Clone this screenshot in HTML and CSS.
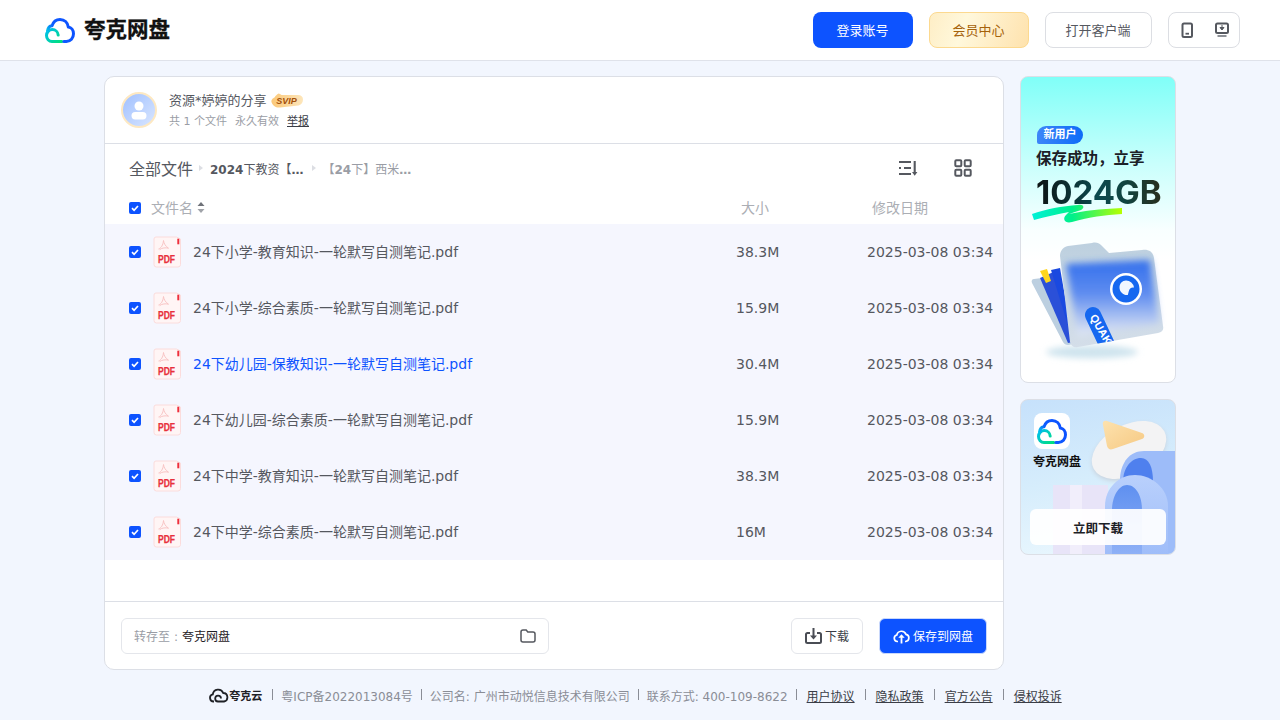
FILE: index.html
```html
<!DOCTYPE html>
<html lang="zh-CN">
<head>
<meta charset="utf-8">
<title>夸克网盘分享</title>
<link rel="stylesheet" href="styles.css">
</head>
<body>
<svg class="defs" width="0" height="0" aria-hidden="true">
  <defs>
    <linearGradient id="cloudBlue" gradientUnits="userSpaceOnUse" x1="3" y1="16" x2="22" y2="6">
      <stop offset="0" stop-color="#00c9e8"/><stop offset=".4" stop-color="#0d5cff"/><stop offset="1" stop-color="#0d53ff"/>
    </linearGradient>
    <linearGradient id="cloudGreen" gradientUnits="userSpaceOnUse" x1="2" y1="10" x2="16" y2="24">
      <stop offset="0" stop-color="#00bdf0"/><stop offset="1" stop-color="#00e07c"/>
    </linearGradient>
    <linearGradient id="svipFill" x1="0" y1="0" x2="1" y2="0">
      <stop offset="0" stop-color="#fbc878"/><stop offset="1" stop-color="#fde6bb"/>
    </linearGradient>
    <symbol id="logo" viewBox="0 0 30 25">
      <path d="M16.700 23.400H7C3.900 23.400 1.500 20.800 1.500 17.500 1.500 14.300 4 11.600 7.300 11.600c3.200 0 5.700 2.500 5.900 5.500" fill="none" stroke="url(#cloudGreen)" stroke-width="3" stroke-linecap="round"/>
      <path d="M2.500 13C3 10 4.800 8 7 7.800 8.300 3.800 11.300 1.500 15 1.500c4.500 0 7.700 3.200 8.300 7.500 3 .4 5.200 3.300 5.200 6.800 0 4.300-3 7.600-7.100 7.600h-2.600" fill="none" stroke="url(#cloudBlue)" stroke-width="3" stroke-linecap="round" stroke-linejoin="round"/>
    </symbol>
    <symbol id="paper" viewBox="0 0 28 32">
      <path d="M3 1h20.500L27.500 3v25.500A2.500 2.500 0 0 1 25 31H3.500A2.500 2.500 0 0 1 1 28.500V3A2 2 0 0 1 3 1z" fill="#fff5f5" stroke="#fbdcdc"/>
      <rect x="24.300" y="2.700" width="2" height="5.600" fill="#ee2f3c"/>
      <path d="M5.500 13c2.500-1 4.500-3.500 5-8.500.3 3 2 5.700 5 7.700-3-.7-6.500-.5-9 1.500" fill="none" stroke="#f9c4c4" stroke-width="1"/>
    </symbol>
    <symbol id="check" viewBox="0 0 12 12">
      <rect width="12" height="12" rx="2" fill="#0d53ff"/>
      <path d="M3 6.200l2.100 2.100L9 4" fill="none" stroke="#fff" stroke-width="1.700"/>
    </symbol>
  </defs>
</svg>

<header class="topbar">
  <div class="brand">
    <svg class="brand-logo"><use href="#logo"/></svg>
    <span class="brand-name">夸克网盘</span>
  </div>
  <nav class="top-actions">
    <a class="btn btn-login">登录账号</a>
    <a class="btn btn-vip">会员中心</a>
    <a class="btn btn-client">打开客户端</a>
    <div class="btn btn-icons">
      <svg width="12" height="16" viewBox="0 0 12 16"><rect x="1.500" y="1.500" width="9.500" height="13.500" rx="1.500" fill="none" stroke="#55585f" stroke-width="2"/><rect x="4.500" y="10.800" width="3.500" height="1.800" fill="#55585f"/></svg>
      <svg width="14" height="16" viewBox="0 0 14 16"><rect x="1" y="1.500" width="12" height="9.500" rx="1.500" fill="none" stroke="#55585f" stroke-width="2"/><path d="M7 3v3.500M5 5.500L7 8l2-2.500z" fill="#55585f" stroke="#55585f"/><rect x="2.500" y="13" width="9" height="2" fill="#8d9096"/></svg>
    </div>
  </nav>
</header>

<main class="page">
  <section class="card">
    <div class="sharer">
      <div class="avatar">
        <svg width="32" height="32" viewBox="0 0 32 32"><circle cx="16" cy="12" r="4.500" fill="#fff"/><rect x="8.500" y="18" width="15" height="7.500" rx="3.700" fill="#fff"/></svg>
      </div>
      <div class="sharer-info">
        <div class="sharer-name">
          <span>资源*婷婷的分享</span>
          <span class="svip">
            <svg class="svip-bg" width="32" height="15" viewBox="0 0 32 15"><path d="M.5 9C0 7 2 5 3.500 4.500 4.500 3 6 1 7.500.5 8.500.5 9.500 1.500 10.500 2H27c3 0 5 1.500 5 4.500S30 12 27.500 12.500L9 14.500c-4 .5-7.500-2-8.500-5.500z" fill="url(#svipFill)"/></svg>
            <span class="svip-text">SVIP</span>
          </span>
        </div>
        <div class="sharer-meta">
          <span>共 1 个文件</span>
          <span>永久有效</span>
          <a class="report">举报</a>
        </div>
      </div>
    </div>

    <div class="crumbbar">
      <div class="crumbs">
        <span class="crumb-root">全部文件</span>
        <i class="crumb-sep"></i>
        <span class="crumb-mid"><b>2024</b>下教资【<b>…</b></span>
        <i class="crumb-sep"></i>
        <span class="crumb-cur">【<b>24</b>下】西米<b>…</b></span>
      </div>
      <div class="view-tools">
        <svg width="20" height="18" viewBox="0 0 20 18"><path d="M1 3h12M1 9h2M6 9h7M1 15h12M16.700 2v12" stroke="#55585f" stroke-width="2.100" fill="none"/><path d="M14 13h5.400l-2.700 3.800z" fill="#55585f"/></svg>
        <svg width="18" height="18" viewBox="0 0 18 18"><g fill="none" stroke="#55585f" stroke-width="2"><rect x="1.300" y="1.300" width="6" height="6" rx="1"/><rect x="10.700" y="1.300" width="6" height="6" rx="1"/><rect x="1.300" y="10.700" width="6" height="6" rx="1"/><rect x="10.700" y="10.700" width="6" height="6" rx="1"/></g></svg>
      </div>
    </div>

    <div class="thead">
      <svg class="check"><use href="#check"/></svg>
      <div class="th-name">文件名
        <svg width="8" height="11" viewBox="0 0 8 11"><path d="M4 0l3.500 4h-7z" fill="#6f7279"/><path d="M4 11L.5 7h7z" fill="#a0a3a9"/></svg>
      </div>
      <div>大小</div>
      <div>修改日期</div>
    </div>

    <div class="rows">
      <div class="row">
        <svg class="check"><use href="#check"/></svg>
        <svg class="pdf" viewBox="0 0 28 32"><use href="#paper"/><text x="13.500" y="26.700" class="pdf-text" textLength="17" lengthAdjust="spacingAndGlyphs" text-anchor="middle">PDF</text></svg>
        <div class="name">24下小学-教育知识-一轮默写自测笔记.pdf</div>
        <div>38.3M</div>
        <div>2025-03-08 03:34</div>
      </div>
      <div class="row">
        <svg class="check"><use href="#check"/></svg>
        <svg class="pdf" viewBox="0 0 28 32"><use href="#paper"/><text x="13.500" y="26.700" class="pdf-text" textLength="17" lengthAdjust="spacingAndGlyphs" text-anchor="middle">PDF</text></svg>
        <div class="name">24下小学-综合素质-一轮默写自测笔记.pdf</div>
        <div>15.9M</div>
        <div>2025-03-08 03:34</div>
      </div>
      <div class="row">
        <svg class="check"><use href="#check"/></svg>
        <svg class="pdf" viewBox="0 0 28 32"><use href="#paper"/><text x="13.500" y="26.700" class="pdf-text" textLength="17" lengthAdjust="spacingAndGlyphs" text-anchor="middle">PDF</text></svg>
        <div class="name name-active">24下幼儿园-保教知识-一轮默写自测笔记.pdf</div>
        <div>30.4M</div>
        <div>2025-03-08 03:34</div>
      </div>
      <div class="row">
        <svg class="check"><use href="#check"/></svg>
        <svg class="pdf" viewBox="0 0 28 32"><use href="#paper"/><text x="13.500" y="26.700" class="pdf-text" textLength="17" lengthAdjust="spacingAndGlyphs" text-anchor="middle">PDF</text></svg>
        <div class="name">24下幼儿园-综合素质-一轮默写自测笔记.pdf</div>
        <div>15.9M</div>
        <div>2025-03-08 03:34</div>
      </div>
      <div class="row">
        <svg class="check"><use href="#check"/></svg>
        <svg class="pdf" viewBox="0 0 28 32"><use href="#paper"/><text x="13.500" y="26.700" class="pdf-text" textLength="17" lengthAdjust="spacingAndGlyphs" text-anchor="middle">PDF</text></svg>
        <div class="name">24下中学-教育知识-一轮默写自测笔记.pdf</div>
        <div>38.3M</div>
        <div>2025-03-08 03:34</div>
      </div>
      <div class="row">
        <svg class="check"><use href="#check"/></svg>
        <svg class="pdf" viewBox="0 0 28 32"><use href="#paper"/><text x="13.500" y="26.700" class="pdf-text" textLength="17" lengthAdjust="spacingAndGlyphs" text-anchor="middle">PDF</text></svg>
        <div class="name">24下中学-综合素质-一轮默写自测笔记.pdf</div>
        <div>16M</div>
        <div>2025-03-08 03:34</div>
      </div>
    </div>

    <div class="savebar">
      <div class="target">
        <span><span class="target-label">转存至<span class="colon">:</span></span>夸克网盘</span>
        <svg width="16" height="14" viewBox="0 0 16 14"><path d="M1 3a2 2 0 0 1 2-2h3.200l1.600 2H13a2 2 0 0 1 2 2v6a2 2 0 0 1-2 2H3a2 2 0 0 1-2-2z" fill="none" stroke="#55585f" stroke-width="1.500"/></svg>
      </div>
      <a class="action action-download">
        <svg width="17" height="16" viewBox="0 0 17 16"><path d="M5 5H2.500A1.500 1.500 0 0 0 1 6.500v7A1.500 1.500 0 0 0 2.500 15h12a1.500 1.500 0 0 0 1.500-1.500v-7A1.500 1.500 0 0 0 14.500 5H12" fill="none" stroke="#4a4d55" stroke-width="2"/><path d="M8.500 0v8" stroke="#4a4d55" stroke-width="2"/><path d="M5 7.500h7L8.500 11.500z" fill="#4a4d55"/></svg>
        下载
      </a>
      <a class="action action-save">
        <svg width="17" height="16" viewBox="0 0 17 16"><path d="M5 13.500H4.300A3.300 3.300 0 0 1 3.800 7 4.800 4.800 0 0 1 13 6.400a3.600 3.600 0 0 1-.3 7.100H12" fill="none" stroke="#fff" stroke-width="1.700"/><path d="M8.500 15.500V8" stroke="#fff" stroke-width="1.800"/><path d="M5.300 9.700l3.200-3.500 3.200 3.500z" fill="#fff"/></svg>
        保存到网盘
      </a>
    </div>
  </section>

  <aside class="side">
    <div class="ad ad-new">
      <svg class="ad-art" viewBox="1021 77 154 305">
        <defs>
          <linearGradient id="fBody" x1="0" y1="0" x2="0" y2="1"><stop offset="0" stop-color="#336fec"/><stop offset=".45" stop-color="#5f8df0"/><stop offset="1" stop-color="#e6ebf4"/></linearGradient>
          <linearGradient id="stroke" x1="0" y1="0" x2="1" y2="0"><stop offset="0" stop-color="#00f0d8"/><stop offset=".45" stop-color="#00f08a"/><stop offset="1" stop-color="#b8ff00"/></linearGradient>
          <linearGradient id="glass" x1="0" y1="0" x2="0" y2="1"><stop offset="0" stop-color="#bdd0df"/><stop offset="1" stop-color="#d4dee9"/></linearGradient>
          <filter id="soft" x="-20%" y="-20%" width="140%" height="140%"><feGaussianBlur stdDeviation="3.500"/></filter>
          <filter id="soft2" x="-30%" y="-60%" width="160%" height="220%"><feGaussianBlur stdDeviation="3"/></filter>
          <clipPath id="fold"><path d="M1060 256c0-5 3-9 8-10l24-3c4-1 7 0 9 2l8 8 33-3c7-1 11 2 12 8l9 68c1 4-1 6-5 7l-80 14c-4 1-7-1-8-5z"/></clipPath>
        </defs>
        <path d="M1032 214c14-5 30-8 46-9 6-1 7 3 3 5l-12 4c14-3 30-5 53-6v6c-18 1-32 3-50 8-7 2-10-3-6-7l3-3c-12 2-24 5-35 8z" fill="url(#stroke)"/>
        <ellipse cx="1092" cy="352" rx="46" ry="6.500" fill="#cfe4ee" filter="url(#soft2)"/>
        <path d="M1032 283c-1-2 0-4 2-4l24-3 15 68-5 1c-2 0-4-1-5-3z" fill="#bccfe0"/>
        <path d="M1040 278l18-8 15 72-5 1z" fill="#2b50d8"/>
        <path d="M1051 270l9-2 13 74z" fill="#1a49e0"/>
        <path d="M1040 271l7-2 4 12-5 2z" fill="#ffd61f"/>
        <path d="M1060 256c0-5 3-9 8-10l24-3c4-1 7 0 9 2l8 8 33-3c7-1 11 2 12 8l9 68c1 4-1 6-5 7l-80 14c-4 1-7-1-8-5z" fill="url(#glass)"/>
        <path d="M1066 264l84-4 9 63-81 13z" fill="url(#fBody)" filter="url(#soft)"/>
        <g clip-path="url(#fold)">
          <path d="M1093 315l16 34" stroke="#1668f0" stroke-width="16" stroke-linecap="round"/>
          <text x="0" y="0" class="tag-text" transform="translate(1089.500 317) rotate(60)">QUAK</text>
        </g>
        <circle cx="1126" cy="289" r="16" fill="#fff"/>
        <circle cx="1126" cy="289" r="13.500" fill="#1668f0"/>
        <path d="M1126 280.500a8 8 0 0 1 8 7c-2.700-.5-4.700 1-5.200 3.700l-1 3.800c-4.300.5-8.300-3.200-8.300-7.500 0-3.800 2.800-7 6.500-7z" fill="#f2f7ff"/>
      </svg>
      <div class="ad-copy">
        <span class="pill">新用户</span>
        <div class="ad-line">保存成功，立享</div>
        <div class="ad-big">1024GB</div>
      </div>
    </div>

    <div class="ad ad-app">
      <svg class="ad-art" viewBox="1021 400 154 154">
        <defs>
          <linearGradient id="tri" x1="0" y1="0" x2="1" y2="1"><stop offset="0" stop-color="#fde2ae"/><stop offset="1" stop-color="#f6c983"/></linearGradient>
          <linearGradient id="arch" x1="0" y1="0" x2="0" y2="1"><stop offset="0" stop-color="#b9d0fc"/><stop offset="1" stop-color="#9fbdf9"/></linearGradient>
          <linearGradient id="hole" x1="0" y1="0" x2="0" y2="1"><stop offset="0" stop-color="#5f90f0"/><stop offset="1" stop-color="#8eb0f6"/></linearGradient>
          <filter id="shade" x="-20%" y="-20%" width="140%" height="140%"><feGaussianBlur stdDeviation="2"/></filter>
        </defs>
        <path d="M1053 485h55v69h-55z" fill="#e8e4f8"/>
        <path d="M1070 485h12v69h-12z" fill="#f1eefb"/>
        <ellipse cx="1129" cy="452" rx="40" ry="25" fill="#c9d3de" transform="rotate(-28 1129 452)" filter="url(#shade)"/>
        <ellipse cx="1129" cy="450" rx="40" ry="25" fill="#f3f3f4" transform="rotate(-28 1129 450)"/>
        <path d="M1107 421c-3-1-5 1-4 4l4 21c1 3 3 4 6 3l29-10c3-1 3-5 0-6z" fill="url(#tri)"/>
        <path d="M1120 478c1-16 10-27 24-27h31v103h-55z" fill="#9dbcf9"/>
        <path d="M1123 482c0-14 8-24 18-24 8 0 12 9 12 24z" fill="#4f80ee"/>
        <path d="M1105 554v-48c0-18 14-31 30-31s33 13 33 31v48z" fill="url(#arch)"/>
        <path d="M1112 554v-44c0-14 7-25 15-25 9 0 15 11 15 25v44z" fill="url(#hole)"/>
      </svg>
      <div class="app-tile"><svg width="30" height="25"><use href="#logo"/></svg></div>
      <div class="app-name">夸克网盘</div>
      <a class="app-btn">立即下载</a>
    </div>
  </aside>
</main>

<footer class="foot">
  <span class="foot-brand">
    <svg width="20" height="16" viewBox="0 0 20 16"><path d="M5 14.500H4.700A3.600 3.600 0 0 1 3.800 7.400 5.400 5.400 0 0 1 14.200 6a4.300 4.300 0 0 1 .8 8.500H9a2.900 2.900 0 1 1 3-3" fill="none" stroke="#1f2126" stroke-width="1.800"/></svg>
    夸克云
  </span>
  <i class="foot-sep"></i>
  <span>粤ICP备2022013084号</span>
  <i class="foot-sep"></i>
  <span>公司名: 广州市动悦信息技术有限公司</span>
  <i class="foot-sep"></i>
  <span>联系方式: 400-109-8622</span>
  <i class="foot-sep"></i>
  <a>用户协议</a>
  <i class="foot-sep"></i>
  <a>隐私政策</a>
  <i class="foot-sep"></i>
  <a>官方公告</a>
  <i class="foot-sep"></i>
  <a>侵权投诉</a>
</footer>
</body>
</html>
```

FILE: styles.css
```css
* { box-sizing: border-box; }

html, body {
  margin: 0;
  height: 720px;
  overflow: hidden;
}

body {
  background: #f2f6fe;
  color: #55585f;
  font-family: "DejaVu Sans", "Noto Sans CJK SC", sans-serif;
  font-size: 14px;
}

.defs { position: absolute; }

/* top bar */
.topbar {
  height: 61px;
  background: #fff;
  border-bottom: 1px solid #dfe2ea;
  display: flex;
  align-items: center;
  justify-content: space-between;
  padding: 0 40px 1px 45px;
}

.brand { display: flex; align-items: center; gap: 9px; }
.brand-logo { width: 30px; height: 25px; margin-top: 1px; }
.brand-name {
  font-size: 21.500px;
  font-weight: 700;
  color: #111;
  line-height: 26px;
  -webkit-text-stroke: .35px #111;
}

.top-actions { display: flex; gap: 16px; }

.btn {
  height: 36px;
  border-radius: 8px;
  font-size: 13px;
  display: flex;
  align-items: center;
  justify-content: center;
  padding: 0 1px 1px 0;
}

.btn-login { width: 100px; background: #0d53ff; color: #fff; }
.btn-vip {
  width: 100px;
  color: #a5620b;
  border: 1px solid #fcd98f;
  background: linear-gradient(110deg, #feeec6 0%, #fff8dc 35%, #fee2ad 100%);
}
.btn-client { width: 107px; border: 1px solid #dcdee3; color: #55585f; }
.btn-icons {
  width: 72px;
  border: 1px solid #dcdee3;
  justify-content: flex-start;
  gap: 22px;
  padding: 0 0 0 12px;
}

/* page */
.page {
  display: flex;
  gap: 16px;
  width: 1072px;
  margin: 15px 0 0 104px;
  align-items: flex-start;
}

.card {
  width: 900px;
  height: 594px;
  background: #fff;
  border: 1px solid #dcdfe6;
  border-radius: 10px;
  display: flex;
  flex-direction: column;
  overflow: hidden;
}

/* sharer */
.sharer {
  height: 67px;
  flex: none;
  border-bottom: 1px solid #dcdfe6;
  display: flex;
  align-items: center;
  gap: 12px;
  padding: 0 0 1px 16px;
}

.avatar {
  width: 36px;
  height: 36px;
  border-radius: 50%;
  border: 2px solid #fde8c2;
  background: linear-gradient(135deg, #a0c0ff, #d9e6ff);
}
.avatar svg { display: block; }

.sharer-info { padding-top: 3px; }

.sharer-name {
  display: flex;
  align-items: center;
  gap: 4px;
  font-size: 13px;
  line-height: 18px;
  color: #55585f;
}

.svip {
  position: relative;
  width: 32px;
  height: 15px;
  margin-top: -1px;
  display: flex;
  align-items: center;
  justify-content: center;
}

.svip-bg { position: absolute; left: 0; top: 0; }

.svip-text {
  position: relative;
  color: #a4500a;
  font-family: "Liberation Sans", sans-serif;
  font-size: 9px;
  font-weight: 700;
  font-style: italic;
}

.sharer-meta {
  display: flex;
  gap: 8px;
  margin-top: 4px;
  font-size: 11px;
  line-height: 16px;
  color: #9a9da5;
}

.report { color: #3a3d46; text-decoration: underline; }

/* breadcrumb */
.crumbbar {
  height: 48px;
  flex: none;
  display: flex;
  align-items: center;
  justify-content: space-between;
  padding: 0 31px 0 24px;
}

.crumbs { display: flex; align-items: center; }
.crumb-root { font-size: 16px; color: #55585f; }
.crumb-mid { font-size: 12px; color: #55585f; padding-right: 2px; }
.crumb-cur { font-size: 12px; color: #9a9da5; }
.crumb-sep {
  width: 0;
  height: 0;
  margin: 0 7px 0 6px;
  border-left: 4px solid #dcdee3;
  border-top: 3.500px solid transparent;
  border-bottom: 3.500px solid transparent;
}
.crumb-mid + .crumb-sep { margin: 0 6px 0 7px; }

.view-tools { display: flex; align-items: center; gap: 36px; }
.view-tools svg { display: block; }

/* table */
.thead {
  height: 32px;
  flex: none;
  display: grid;
  grid-template-columns: 22px 590px 131px 1fr;
  align-items: center;
  padding: 0 0 2px 24px;
  color: #abaeb4;
}

.th-name { display: flex; align-items: center; gap: 4px; }
.th-name svg { margin-top: 1px; }

.check { width: 12px; height: 12px; display: block; }
.thead .check { margin-top: 2px; }

.rows { background: #f5f6fe; flex: none; }

.row {
  height: 56px;
  display: grid;
  grid-template-columns: 24px 40px 543px 131px 1fr;
  align-items: center;
  padding-left: 24px;
  white-space: nowrap;
}

.pdf { width: 28px; height: 32px; display: block; }
.pdf-text {
  font-family: "Liberation Sans", sans-serif;
  font-size: 10.500px;
  font-weight: 700;
  fill: #e8303c;
  stroke: #e8303c;
  stroke-width: .25px;
}

.name { padding-bottom: 2px; }
.name-active { color: #0d53ff; }

/* save bar */
.savebar {
  margin-top: auto;
  height: 68px;
  flex: none;
  border-top: 1px solid #dcdfe6;
  display: flex;
  align-items: center;
  padding: 0 16px;
  font-size: 12px;
  color: #1f2126;
}

.target {
  width: 428px;
  height: 36px;
  margin-right: auto;
  border: 1px solid #e4e6eb;
  border-radius: 6px;
  display: flex;
  align-items: center;
  justify-content: space-between;
  padding: 0 12px;
}
.target-label { color: #9a9da5; }
.colon { display: inline-block; width: 12px; padding-left: 4px; }

.action {
  height: 36px;
  border-radius: 6px;
  display: flex;
  align-items: center;
  justify-content: center;
  gap: 3px;
}
.action-download {
  width: 72px;
  border: 1px solid #e4e6eb;
  color: #3a3d46;
  margin-right: 16px;
}
.action-save {
  width: 108px;
  background: #0d53ff;
  border: 1px solid #c9d8fb;
  color: #fff;
}

/* side */
.side { width: 156px; display: flex; flex-direction: column; gap: 16px; }

.ad {
  position: relative;
  overflow: hidden;
  width: 156px;
  border: 1px solid #dcdfe6;
  border-radius: 8px;
}

.ad-art {
  position: absolute;
  left: 0;
  top: 0;
  width: 154px;
  height: 100%;
}

.tag-text {
  font-family: "Liberation Sans", sans-serif;
  font-size: 11px;
  font-weight: 700;
  fill: #fff;
}

.ad-new {
  height: 307px;
  background: linear-gradient(180deg, #80fff8 0%, #c8fffc 28%, #f8ffff 50%, #fff 60%);
  padding: 49px 0 0 15px;
}

.ad-copy { position: relative; }

.pill {
  display: block;
  width: 46px;
  height: 18px;
  border-radius: 9px 9px 9px 2px;
  background: linear-gradient(90deg, #3d86f8, #0d6cf8);
  color: #fff;
  font-size: 11px;
  font-weight: 700;
  line-height: 18px;
  text-align: center;
  margin-left: 1px;
}

.ad-line {
  margin-top: 4px;
  font-size: 15.500px;
  line-height: 22px;
  font-weight: 700;
  color: #1c2026;
  white-space: nowrap;
}

.ad-big {
  margin-top: 4px;
  font-family: Inter, sans-serif;
  font-size: 33px;
  line-height: 36px;
  font-weight: 700;
  white-space: nowrap;
  background: linear-gradient(90deg, #0c1212 0%, #0b4a4e 45%, #10443f 65%, #33260f 100%);
  -webkit-background-clip: text;
  background-clip: text;
  color: transparent;
}

.ad-app {
  height: 156px;
  background: linear-gradient(170deg, #c6e1fb 0%, #d6edfc 50%, #ecf8fe 100%);
  padding: 13px 0 0 13px;
  display: flex;
  flex-direction: column;
}

.app-tile {
  position: relative;
  width: 36px;
  height: 36px;
  background: #fff;
  border-radius: 8px;
  display: flex;
  align-items: center;
  justify-content: center;
}
.app-tile svg { display: block; }

.app-name {
  position: relative;
  margin: 3px 0 0 -1px;
  font-size: 12px;
  line-height: 20px;
  font-weight: 700;
  color: #111;
  white-space: nowrap;
}

.app-btn {
  position: relative;
  margin: 37px 0 0 -4px;
  width: 136px;
  height: 36px;
  border-radius: 6px;
  background: rgba(255, 255, 255, .93);
  color: #1c2026;
  font-size: 12.500px;
  font-weight: 700;
  display: flex;
  align-items: center;
  justify-content: center;
}

/* footer */
.foot {
  display: flex;
  justify-content: center;
  align-items: center;
  height: 20px;
  margin-top: 15px;
  padding-right: 7px;
  font-size: 12px;
  color: #8a8d96;
  white-space: nowrap;
}

.foot a { color: #3a3d46; text-decoration: underline; margin: 0 2px; }

.foot-brand {
  display: flex;
  align-items: center;
  font-size: 11px;
  font-weight: 700;
  color: #1f2126;
  margin-right: 2px;
}

.foot-sep {
  width: 1px;
  height: 11px;
  margin: -2px 8px 0;
  background: #8a8d96;
}
```
